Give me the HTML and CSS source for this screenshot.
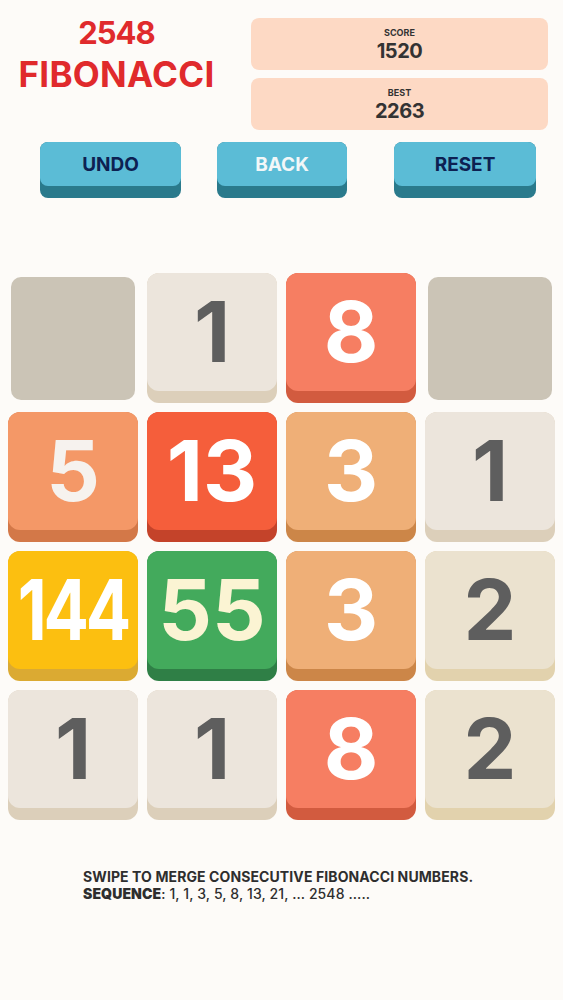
FILE: index.html
```html
<!DOCTYPE html>
<html>
<head>
<meta charset="utf-8">
<link rel="stylesheet" href="styles.css">
</head>
<body>
<div class="page">
  <header class="header">
    <div class="title">
      <div class="title-num">2548</div>
      <div class="title-word">FIBONACCI</div>
    </div>
    <div class="scores">
      <div class="score-box"><div class="score-label">SCORE</div><div class="score-value">1520</div></div>
      <div class="score-box"><div class="score-label">BEST</div><div class="score-value">2263</div></div>
    </div>
  </header>
  <div class="buttons">
    <div class="btn btn-undo"><div class="btn-face dark">UNDO</div></div>
    <div class="btn btn-back"><div class="btn-face light">BACK</div></div>
    <div class="btn btn-reset"><div class="btn-face dark">RESET</div></div>
  </div>
  <div class="grid">
    <div class="cell"><div class="empty"></div></div>
    <div class="tile t1"><div class="face">1</div></div>
    <div class="tile t8"><div class="face">8</div></div>
    <div class="cell"><div class="empty"></div></div>

    <div class="tile t5"><div class="face">5</div></div>
    <div class="tile t13"><div class="face">13</div></div>
    <div class="tile t3"><div class="face">3</div></div>
    <div class="tile t1"><div class="face">1</div></div>

    <div class="tile t144"><div class="face"><span class="narrow">144</span></div></div>
    <div class="tile t55"><div class="face">55</div></div>
    <div class="tile t3"><div class="face">3</div></div>
    <div class="tile t2"><div class="face">2</div></div>

    <div class="tile t1"><div class="face">1</div></div>
    <div class="tile t1"><div class="face">1</div></div>
    <div class="tile t8"><div class="face">8</div></div>
    <div class="tile t2"><div class="face">2</div></div>
  </div>
  <div class="footer">
    <div>SWIPE TO MERGE CONSECUTIVE FIBONACCI NUMBERS.</div>
    <div><b>SEQUENCE</b><span class="seq">: 1, 1, 3, 5, 8, 13, 21, ... 2548 .....</span></div>
  </div>
</div>
</body>
</html>
```

FILE: styles.css
```css
html, body {
  margin: 0;
  padding: 0;
  background: #fdfbf8;
}
body {
  font-family: Inter, "Open Sans", "Liberation Sans", sans-serif;
  width: 563px;
  height: 1000px;
  overflow: hidden;
}
.page {
  display: flex;
  flex-direction: column;
}
.header {
  display: flex;
  padding-top: 18px;
  height: 112px;
}
.title {
  width: 233px;
  display: flex;
  flex-direction: column;
  align-items: center;
  color: #e02a2c;
  font-weight: 700;
}
.title-num {
  font-size: 31px;
  line-height: 30px;
  letter-spacing: -1px;
}
.title-word {
  font-size: 35px;
  line-height: 36px;
  letter-spacing: 0.3px;
  margin-top: 8px;
}
.scores {
  margin-left: 18px;
  width: 297px;
  display: flex;
  flex-direction: column;
  gap: 8px;
}
.score-box {
  height: 52px;
  background: #fdd9c4;
  border-radius: 8px;
  display: flex;
  flex-direction: column;
  align-items: center;
  color: #333;
  font-weight: 700;
}
.score-label {
  font-size: 9px;
  line-height: 10px;
  margin-top: 10px;
}
.score-value {
  font-size: 20px;
  line-height: 22px;
  margin-top: 2px;
  letter-spacing: -0.5px;
}
.buttons {
  display: flex;
  margin-top: 12px;
  padding-left: 40px;
}
.btn {
  height: 56px;
  background: #2a7a8c;
  border-radius: 8px;
}
.btn-undo { width: 141px; }
.btn-back { width: 130px; margin-left: 36px; }
.btn-reset { width: 142px; margin-left: 47px; }
.btn-face {
  height: 44px;
  background: #5bbcd6;
  border-radius: 8px;
  display: flex;
  align-items: center;
  justify-content: center;
  font-weight: 700;
  font-size: 19px;
}
.btn-face.dark { color: #0d2152; }
.btn-face.light { color: #f2f7f8; }
.grid {
  margin-top: 75px;
  margin-left: 8px;
  display: grid;
  grid-template-columns: repeat(4, 130px);
  grid-auto-rows: 130px;
  gap: 9px;
}
.cell {
  display: flex;
}
.empty {
  margin: 4px 3px 3px 3px;
  flex: 1;
  background: #cbc4b6;
  border-radius: 10px;
}
.tile {
  border-radius: 12px;
}
.face {
  height: 118px;
  border-radius: 12px;
  display: flex;
  align-items: center;
  justify-content: center;
  font-weight: 700;
  font-size: 84px;
  line-height: 1;
  color: #ffffff;
}
.t1 { background: #dccfba; }
.t1 .face { background: #ece5dc; color: #5e5e5e; }
.t2 { background: #e2d2ad; }
.t2 .face { background: #ebe2cf; color: #5e5e5e; }
.t3 { background: #cc8648; }
.t3 .face { background: #efaf77; }
.t5 { background: #d37848; }
.t5 .face { background: #f49867; color: #f6f2ee; }
.t8 { background: #d25b3f; }
.t8 .face { background: #f67e62; }
.t13 { background: #c4432a; }
.t13 .face { background: #f55e3b; }
.t55 { background: #2f7f46; }
.t55 .face { background: #43aa5c; color: #fbf4d3; }
.t144 { background: #dbaa32; }
.t144 .face { background: #fcbf10; }
.narrow {
  display: inline-block;
  transform: scaleX(0.8);
  letter-spacing: -4px;
}
.footer {
  margin-top: 48px;
  padding-left: 83px;
  font-size: 14px;
  line-height: 17px;
  font-weight: 700;
  color: #2e2e2e;
  letter-spacing: 0.1px;
}
.seq {
  font-weight: 500;
}
```
